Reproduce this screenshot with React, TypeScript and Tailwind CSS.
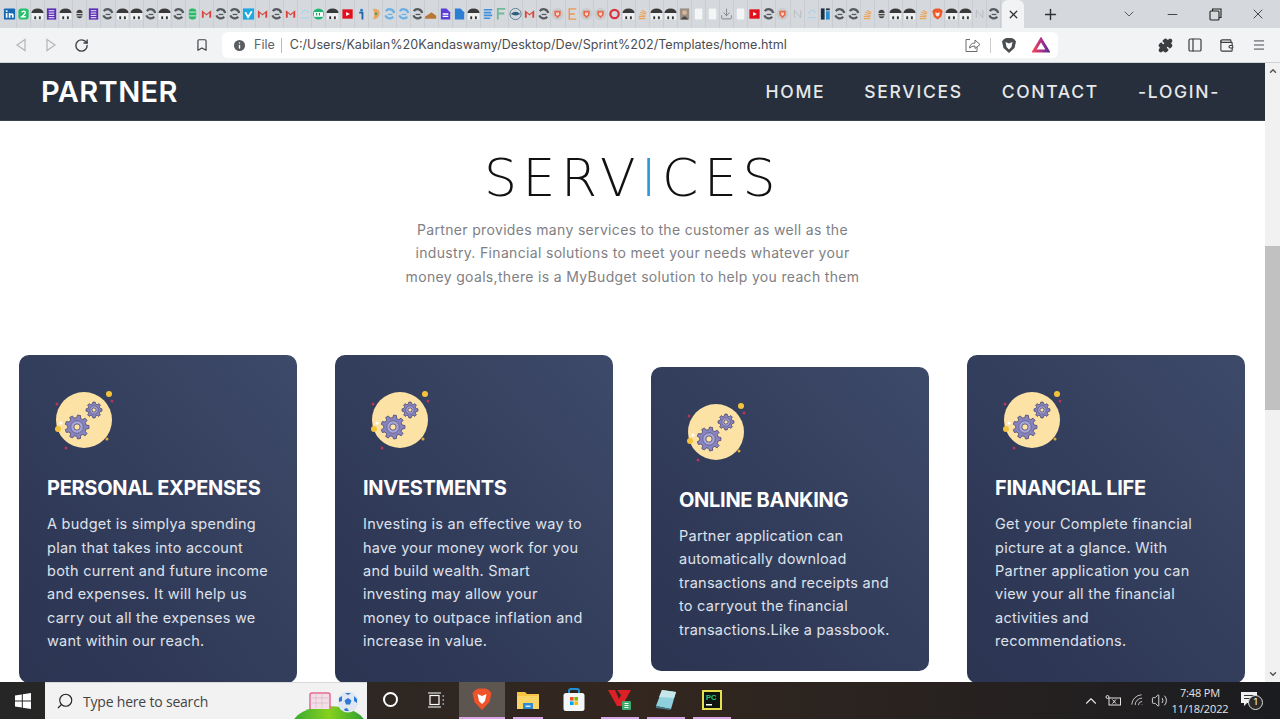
import {
  Bookmark,
  ChevronDown,
  ChevronUp,
  Download,
  Info,
  Menu,
  Minus,
  PanelLeft,
  Plus,
  Puzzle,
  RotateCw,
  Search,
  Volume2,
  Wallet,
  Wifi,
  X,
} from "lucide-react";

const tabIcons = [
  "li", "two", "arch", "lines", "arch", "bee", "lines", "spin", "arch", "arch", "spin", "arch", "spin", "db", "gmail", "spin",
  "spin", "vimeo", "gmail", "spin", "gmail", "cloud", "cb", "arch", "yt", "info", "ear", "bluespin", "bluespin", "spin", "hat",
  "doc", "bluedoc", "arch", "bluelines", "f", "globe", "gmail", "spin", "shield", "e", "shield", "shield", "ring", "arch", "stack",
  "arch", "arch", "photo", "blank", "blank", "down", "blank", "yt", "spin", "shield", "n", "cloud", "idark", "spin", "spin",
  "stack", "bee", "arch", "arch", "stack", "brave", "arch", "arch", "n", "spin",
];

const cards = [
  {
    title: "PERSONAL EXPENSES",
    lines: ["A budget is simplya spending", "plan that takes into account", "both current and future income", "and expenses. It will help us", "carry out all the expenses we", "want within our reach."],
  },
  {
    title: "INVESTMENTS",
    lines: ["Investing is an effective way to", "have your money work for you", "and build wealth. Smart", "investing may allow your", "money to outpace inflation and", "increase in value."],
  },
  {
    title: "ONLINE BANKING",
    lines: ["Partner application can", "automatically download", "transactions and receipts and", "to carryout the financial", "transactions.Like a passbook."],
  },
  {
    title: "FINANCIAL LIFE",
    lines: ["Get your Complete financial", "picture at a glance. With", "Partner application you can", "view your all the financial", "activities and", "recommendations."],
  },
];

function Favicon({ kind }: { kind: string }) {
  const arch = (
    <>
      <path d="M0.5 6 A6.5 5 0 0 1 13.5 6 Z" fill="#3a3a3a" />
      <rect x="1" y="6" width="12" height="7" fill="#eef0f1" />
      <rect x="3.5" y="9.5" width="2" height="3" fill="#333" />
      <rect x="8.5" y="9.5" width="2" height="3" fill="#333" />
    </>
  );
  const spin = (color: string) => (
    <>
      <path d="M3 4 A5 5 0 0 1 12 6 M11 10 A5 5 0 0 1 2.5 8.5" fill="none" stroke={color} strokeWidth="2.4" />
      <path d="M5 7.5 h5" stroke={color} strokeWidth="1.4" />
    </>
  );
  const shapes: Record<string, React.ReactNode> = {
    li: (
      <>
        <rect x="1" y="1" width="12" height="12" rx="1" fill="#1669b5" />
        <rect x="3" y="6" width="1.8" height="5" fill="#fff" />
        <rect x="3" y="3" width="1.8" height="1.8" fill="#fff" />
        <path d="M6.2 11 V6 H8 V7 Q11 5 11.4 8 V11 H9.6 V8.4 Q8 7.4 8 9 V11 Z" fill="#fff" />
      </>
    ),
    two: (
      <>
        <rect x="1.5" y="1" width="11" height="12" rx="3" fill="#25c16f" />
        <path d="M5 5.2 Q7 2.8 9 5 Q9 6.6 5 10 H9.4" fill="none" stroke="#fff" strokeWidth="1.5" />
      </>
    ),
    arch,
    lines: (
      <>
        <rect x="2" y="1" width="10" height="12" fill="#5b2fb3" />
        <path d="M4 3.5 H10 M4 6 H10 M4 8.5 H10 M4 11 H10" stroke="#fff" strokeWidth="1" />
      </>
    ),
    bluelines: <path d="M3 2.5 H12 M3 5.5 H11 M3 8.5 H12 M3 11.5 H10" stroke="#3f8ee0" strokeWidth="1.7" />,
    bee: (
      <>
        <ellipse cx="7" cy="7" rx="3.4" ry="4.5" fill="#444" />
        <path d="M1.5 6.5 H12.5 M3 9 H11" stroke="#ddd" strokeWidth="1" />
      </>
    ),
    spin: spin("#555a5e"),
    bluespin: spin("#6ab0e4"),
    db: (
      <>
        <rect x="3" y="1" width="8" height="12" rx="3.5" fill="#2fb568" />
        <path d="M3 5 H11 M3 9 H11" stroke="#d5f0df" strokeWidth="1" />
      </>
    ),
    gmail: <path d="M2 3 V11 H4 V6 L7 8.6 L10 6 V11 H12 V3 L7 7 Z" fill="#d9453a" />,
    vimeo: (
      <>
        <rect x="1" y="1" width="12" height="12" fill="#1ca7e0" />
        <path d="M3.5 5 L6.5 10.5 L10.5 4" fill="none" stroke="#fff" strokeWidth="2" />
      </>
    ),
    cloud: <path d="M3 11 H12 M4 7 Q5 3 8 3 Q10 3 11 6" fill="none" stroke="#a6d2ea" strokeWidth="1.2" />,
    cb: (
      <>
        <circle cx="7" cy="7" r="6" fill="#22b573" />
        <rect x="2" y="5" width="10" height="5" fill="#fff" />
        <path d="M5 6 V8.6 M8 6 V8.6" stroke="#1a8d59" strokeWidth="1.2" />
      </>
    ),
    yt: (
      <>
        <rect x="1.5" y="2" width="11" height="10" fill="#e0101d" />
        <path d="M5.5 4.8 L9.5 7 L5.5 9.2 Z" fill="#fff" />
      </>
    ),
    info: (
      <>
        <circle cx="7" cy="3" r="1.6" fill="#2c7fd0" />
        <path d="M4.5 5.5 H8 V13" fill="none" stroke="#2663a8" strokeWidth="2" />
      </>
    ),
    idark: (
      <>
        <rect x="2" y="1" width="4" height="12" fill="#1f2f44" />
        <rect x="7.5" y="4" width="4" height="9" fill="#2d8fd0" />
        <rect x="7.5" y="1" width="4" height="2" fill="#1f2f44" />
      </>
    ),
    ear: (
      <>
        <path d="M4 1.5 Q12 1 11.5 7 Q10 13 4.5 12.5 Q7 7 4 1.5 Z" fill="#e7a766" />
        <circle cx="7.5" cy="6.8" r="1.5" fill="#5a9b62" />
      </>
    ),
    hat: <path d="M0 10 L7 5 L12 9 V12 H0 Z" fill="#b7793a" />,
    doc: (
      <>
        <path d="M2 1 H8 L12 5 V13 H2 Z" fill="#5a3fd6" />
        <path d="M4 7 H10 M4 9.5 H10" stroke="#fff" strokeWidth="1.4" />
      </>
    ),
    bluedoc: <path d="M2 1 H8 L12 5 V13 H2 Z" fill="#2a7fd5" />,
    f: <path d="M3 13 V1.5 H11 M3 6.5 H10" fill="none" stroke="#73b89a" strokeWidth="2" />,
    globe: (
      <>
        <circle cx="7" cy="7" r="6" fill="none" stroke="#577b8f" strokeWidth="1" />
        <path d="M2 7 Q7 2 12 7 Q7 10 2 7 Z" fill="#2e5f7f" />
      </>
    ),
    shield: (
      <>
        <circle cx="7" cy="7" r="6.5" fill="#c9cbcd" />
        <path d="M3.6 3.5 H10.4 V8 L7 11.5 L3.6 8 Z" fill="#e8694a" />
        <path d="M5.4 5.4 H8.6 V7.6 L7 9.2 L5.4 7.6 Z" fill="#f6d3c8" />
      </>
    ),
    e: <path d="M11 1.5 H3.5 V12.5 H11 M3.5 7 H9.5" fill="none" stroke="#ea9651" strokeWidth="1.5" />,
    ring: <circle cx="7" cy="7" r="4.5" fill="none" stroke="#d9333f" strokeWidth="2.4" />,
    stack: <path d="M3 12 H10 M3 9.8 H10 M3.6 7.5 L10 8.6 M4.6 5 L10.4 7 M6.5 2.8 L11 6" fill="none" stroke="#eda55c" strokeWidth="1.2" />,
    photo: (
      <>
        <rect x="2" y="1" width="10" height="12" fill="#9a8f84" />
        <circle cx="7" cy="5.5" r="2.6" fill="#d9b59a" />
        <path d="M3 13 Q7 6 11 13 Z" fill="#4d4a48" />
      </>
    ),
    blank: <rect x="3" y="1" width="8" height="12" rx="1.5" fill="#f4f5f6" />,
    n: <path d="M3.5 11 V3 L10.5 11 V3" fill="none" stroke="#b5b9bc" strokeWidth="1" />,
    brave: (
      <>
        <path d="M3 2 L5 1 H9 L11 2 L12.5 4 L11 10 L7 13 L3 10 L1.5 4 Z" fill="#ec5a2b" />
        <path d="M4.5 5 L7 6 L9.5 5 L8.8 8.5 L7 10 L5.2 8.5 Z" fill="#fbe3da" />
      </>
    ),
  };
  if (kind === "down") {
    return <Download size={14} strokeWidth={1.4} className="text-[#6c7176]" />;
  }
  return (
    <svg width="14" height="14" viewBox="0 0 14 14">
      {shapes[kind]}
    </svg>
  );
}

// toothed wheel outline, outer radius r
function gearPath(cx: number, cy: number, r: number, teeth: number) {
  const inner = r * 0.78;
  const step = (Math.PI * 2) / teeth;
  const pts: string[] = [];
  for (let i = 0; i < teeth; i++) {
    const a = i * step;
    const corners: [number, number][] = [
      [a - step * 0.3, inner],
      [a - step * 0.18, r],
      [a + step * 0.18, r],
      [a + step * 0.3, inner],
    ];
    for (const [t, rad] of corners) {
      pts.push(`${(cx + rad * Math.cos(t)).toFixed(2)} ${(cy + rad * Math.sin(t)).toFixed(2)}`);
    }
  }
  return `M${pts.join(" L")} Z`;
}

function GearBadge() {
  const gear = (cx: number, cy: number, r: number, teeth: number) => (
    <g>
      <path d={gearPath(cx, cy, r, teeth)} fill="#8784c0" stroke="#4a4870" strokeWidth="0.8" strokeLinejoin="round" />
      <circle cx={cx} cy={cy} r={r * 0.52} fill="#a7a5d6" stroke="#4a4870" strokeWidth="0.6" />
      <circle cx={cx} cy={cy} r={r * 0.26} fill="#fde4a6" stroke="#4a4870" strokeWidth="0.8" />
    </g>
  );
  return (
    <svg width="62" height="62" viewBox="0 0 62 62">
      <circle cx="30" cy="30" r="28" fill="#fde2a5" />
      {gear(23, 37, 12, 9)}
      {gear(40, 20, 8, 8)}
      <circle cx="4" cy="39" r="3" fill="#f5c33b" />
      <circle cx="55" cy="4" r="3" fill="#f5c33b" />
      <circle cx="58" cy="11" r="1.5" fill="#b7345d" />
      <circle cx="3" cy="14" r="1.5" fill="#b7345d" />
      <circle cx="12" cy="58" r="1.5" fill="#b7345d" />
      <circle cx="53" cy="49" r="1.5" fill="#e3ab33" />
      <circle cx="7" cy="33" r="1.6" fill="#fff" />
    </svg>
  );
}

function ServiceCard({ title, lines }: { title: string; lines: string[] }) {
  return (
    <div className="w-[278px] rounded-[10px] bg-linear-to-tr from-[#2b3451] via-[#333e5c] to-[#3e4a69] pt-[35px] pb-[30px] pl-[28px] pr-2 text-[#dfe1ea]">
      <div className="ml-[7px] h-[62px]">
        <GearBadge />
      </div>
      <h3 className="mt-[22px] text-[20px] leading-[28px] font-bold tracking-[-0.3px] whitespace-nowrap text-white">{title}</h3>
      <p className="mt-[10px] text-[14.5px] leading-[23.4px] tracking-[0.25px] whitespace-nowrap">
        {lines.map((line) => (
          <span key={line} className="block">
            {line}
          </span>
        ))}
      </p>
    </div>
  );
}

function TabStrip() {
  return (
    <div className="flex h-[28px] shrink-0 items-center bg-[#d5d9dd]">
      <div className="flex w-[1002px] shrink-0 pl-[3px]">
        {tabIcons.map((kind, i) => (
          <div key={i} className="flex h-[28px] w-[14.07px] shrink-0 items-center justify-center border-r border-[#c9cdd1]">
            <Favicon kind={kind} />
          </div>
        ))}
      </div>
      <div className="flex h-[28px] w-[22px] shrink-0 items-center justify-center rounded-t-md bg-[#f1f3f5]">
        <X size={13} strokeWidth={2.4} className="text-[#2f3133]" />
      </div>
      <div className="flex w-[52px] shrink-0 justify-center">
        <Plus size={17} strokeWidth={2} className="text-[#2f3133]" />
      </div>
      <div className="ml-[33px] flex w-[40px] shrink-0 justify-center">
        <ChevronDown size={16} strokeWidth={1.2} className="text-[#3b3d40]" />
      </div>
      <div className="flex w-[46px] shrink-0 justify-center">
        <Minus size={15} strokeWidth={1.3} className="text-[#222]" />
      </div>
      <div className="flex w-[40px] shrink-0 justify-center">
        <svg width="13" height="13" viewBox="0 0 13 13" fill="none" stroke="#222" strokeWidth="1.1">
          <rect x="1" y="3" width="9" height="9" rx="1" />
          <path d="M3.5 3 V1 H12 V9.5 H10" />
        </svg>
      </div>
      <div className="flex w-[45px] shrink-0 justify-center">
        <X size={16} strokeWidth={1.2} className="text-[#222]" />
      </div>
    </div>
  );
}

function Toolbar() {
  return (
    <div className="flex h-[35px] shrink-0 items-center border-b border-[#d0d3d6] bg-[#f1f3f5]">
      <div className="flex w-[222px] items-center">
        <svg width="12" height="14" viewBox="0 0 12 14" className="ml-[15px]">
          <path d="M10 1.5 L2 7 L10 12.5 Z" fill="none" stroke="#b3b6b9" strokeWidth="1.2" />
        </svg>
        <svg width="12" height="14" viewBox="0 0 12 14" className="ml-[18px]">
          <path d="M2 1.5 L10 7 L2 12.5 Z" fill="none" stroke="#b3b6b9" strokeWidth="1.2" />
        </svg>
        <RotateCw size={15} strokeWidth={2.2} className="ml-[17px] text-[#3e4145]" />
        <Bookmark size={14} strokeWidth={2} className="ml-[106px] text-[#3e4145]" />
      </div>
      <div className="flex h-[26px] w-[836px] items-center rounded-md bg-white">
        <Info size={15} strokeWidth={2.2} fill="#5a5d60" className="ml-[10px] text-white" />
        <span className="ml-[7px] text-[12.5px] text-[#5f6368]">File</span>
        <span className="ml-[6px] h-[15px] w-px bg-[#b9bcbf]" />
        <span className="ml-[8px] w-[673px] text-[12.6px] whitespace-nowrap text-[#4a4d51]">
          C:/Users/Kabilan%20Kandaswamy/Desktop/Dev/Sprint%202/Templates/home.html
        </span>
        <svg width="16" height="15" viewBox="0 0 16 15" fill="none" stroke="#6a6d70" strokeWidth="1" className="ml-[2px]">
          <path d="M5 1.5 H1 V13.5 H12 V9" />
          <path d="M4.5 10 Q5 5 10 5 V2 L15 6.5 L10 10.5 V8 Q6.5 8 4.5 10 Z" />
        </svg>
        <span className="ml-[9px] h-[15px] w-px bg-[#c9ccce]" />
        <svg width="16" height="17" viewBox="0 0 16 17" className="ml-[10px]">
          <path d="M3 2 L5.5 1 H10.5 L13 2 L15 4.5 L13.5 11 L8 16 L2.5 11 L1 4.5 Z" fill="#4a4d52" />
          <path d="M4.5 5 L8 6.5 L11.5 5 L10.5 10 L8 12.5 L5.5 10 Z" fill="#fff" />
        </svg>
        <svg width="18" height="16" viewBox="0 0 18 16" className="ml-[15px]">
          <defs>
            <linearGradient id="bat" x1="0" x2="1" y1="0" y2="0">
              <stop offset="0" stopColor="#f2405a" />
              <stop offset="0.6" stopColor="#9e2f8f" />
              <stop offset="1" stopColor="#662d91" />
            </linearGradient>
          </defs>
          <path d="M9 2.5 L16 14 H2 Z" fill="none" stroke="url(#bat)" strokeWidth="3" />
        </svg>
      </div>
      <div className="flex flex-1 items-center">
        <Puzzle size={15} strokeWidth={2} fill="#3a3c3f" className="ml-[100px] text-[#3a3c3f]" />
        <PanelLeft size={16} strokeWidth={1.8} className="ml-[14px] text-[#3a3c3f]" />
        <Wallet size={15} strokeWidth={1.8} className="ml-[16px] text-[#3a3c3f]" />
        <Menu size={14} strokeWidth={1.6} className="ml-[18px] text-[#3a3c3f]" />
      </div>
    </div>
  );
}

function Navbar() {
  return (
    <nav className="flex h-[58px] shrink-0 items-center justify-between border-b border-[#3a434e] bg-[#262f3b] pr-[45px] pl-[41px] text-[#e6e8ea]">
      <span className="text-[29px] font-semibold tracking-[0.4px] text-white">PARTNER</span>
      <div className="flex gap-[39px] pt-px text-[17.5px] font-medium tracking-[1.7px]">
        <span>HOME</span>
        <span>SERVICES</span>
        <span>CONTACT</span>
        <span>-LOGIN-</span>
      </div>
    </nav>
  );
}

function Scrollbar() {
  return (
    <div className="flex w-[15px] shrink-0 flex-col items-center bg-[#f1f1f1]">
      <ChevronUp size={10} strokeWidth={3.5} className="mt-[3px] text-[#555]" />
      <div className="mt-[170px] h-[164px] w-full bg-[#c1c1c1]" />
      <div className="flex-1" />
      <ChevronDown size={10} strokeWidth={3.5} className="mb-[3px] text-[#555]" />
    </div>
  );
}

function TaskIcon({ children, active, bar }: { children: React.ReactNode; active?: boolean; bar?: string }) {
  return (
    <div className={`flex h-[37px] w-[46px] flex-col items-center ${active ? "bg-[#5d5550]" : ""}`}>
      <div className="flex flex-1 items-center justify-center">{children}</div>
      {bar ? <div className={`h-[2px] bg-[#d9a6e8] ${bar}`} /> : <div className="h-[2px]" />}
    </div>
  );
}

function Taskbar() {
  return (
    <div className="flex h-[37px] shrink-0 items-center bg-linear-to-r from-[#262626] via-[#33271f] to-[#1b1c20] text-white">
      <div className="flex w-[45px] justify-center">
        <svg width="16" height="16" viewBox="0 0 16 16">
          <path d="M0 2.4 L6.8 1.4 V7.5 H0 Z M7.8 1.2 L16 0 V7.5 H7.8 Z M0 8.5 H6.8 V14.6 L0 13.6 Z M7.8 8.5 H16 V16 L7.8 14.8 Z" fill="#fff" />
        </svg>
      </div>
      <div className="relative flex h-[37px] w-[322px] items-center overflow-hidden border-t border-[#d9d9d9] bg-[#f2f2f2]">
        <Search size={18} strokeWidth={1.5} className="ml-[11px] -scale-x-100 text-[#222]" />
        <span className="ml-[9px] font-['Open_Sans',sans-serif] text-[14px] tracking-[-0.2px] text-[#444]">Type here to search</span>
        <div className="absolute top-[23px] left-[247px] h-[40px] w-[74px] rounded-[50%] bg-linear-to-r from-[#2fa82f] via-[#86d11c] to-[#1f9d2f]" />
        <svg width="24" height="18" viewBox="0 0 24 18" className="absolute top-[9px] left-[263px]">
          <path d="M2 17 V3 Q2 1 4 1 H20 Q22 1 22 3 V17" fill="#f3dfe8" stroke="#e66a93" strokeWidth="1.5" />
          <path d="M2 6 H22 M2 11 H22 M8 1 V16 M14 1 V16" stroke="#d9b7c6" strokeWidth="0.7" />
        </svg>
        <svg width="22" height="22" viewBox="0 0 22 22" className="absolute top-[8px] left-[292px]">
          <circle cx="11" cy="11" r="10.5" fill="#dfe7f3" />
          <path d="M11 7 L14.5 9.5 L13 13.5 H9 L7.5 9.5 Z M2 7 L5 5 L5 10 L2 11 Z M17 5 L20 8 L20 12 L17 10 Z M8 2 H14 L11 4 Z M7 18 L10 17 L12 20 L8 20 Z" fill="#2f78d6" />
        </svg>
      </div>
      <TaskIcon>
        <span className="h-[15px] w-[15px] rounded-full border-2 border-white" />
      </TaskIcon>
      <TaskIcon>
        <svg width="18" height="16" viewBox="0 0 18 16" fill="none" stroke="#fff" strokeWidth="1.2">
          <rect x="3" y="3.5" width="9" height="9" />
          <path d="M1 1 H14 M1 15 H14 M15.5 4 H17 M15.5 8 H17 M15.5 12 H17" />
        </svg>
      </TaskIcon>
      <TaskIcon active bar="w-full">
        <svg width="20" height="23" viewBox="0 0 20 23">
          <path d="M4 1.5 L7 0.5 H13 L16 1.5 L19.5 5 L17.5 14 L10 22 L2.5 14 L0.5 5 Z" fill="#f0532a" />
          <path d="M5.5 6 L10 8 L14.5 6 L13 13 L10 16 L7 13 Z" fill="#fff" />
        </svg>
      </TaskIcon>
      <TaskIcon bar="w-[30px]">
        <svg width="22" height="18" viewBox="0 0 22 18">
          <path d="M0 1 H8 L10 3 H22 V18 H0 Z" fill="#f7c444" />
          <rect x="0" y="5" width="22" height="13" fill="#fbd466" />
          <path d="M6 12 H16 V18 H6 Z" fill="#2f8bd0" />
          <path d="M8.5 14.5 H13.5 V16 H8.5 Z" fill="#d6ecfb" />
        </svg>
      </TaskIcon>
      <TaskIcon>
        <svg width="22" height="24" viewBox="0 0 22 24">
          <path d="M6 6 V3 Q6 1 8 1 H14 Q16 1 16 3 V6" fill="none" stroke="#1f8fd6" strokeWidth="2" />
          <rect x="0.5" y="5" width="21" height="18" rx="2.5" fill="#f5f6f7" />
          <rect x="7" y="9" width="3.6" height="3.6" fill="#f25022" />
          <rect x="11.4" y="9" width="3.6" height="3.6" fill="#7fba00" />
          <rect x="7" y="13.4" width="3.6" height="3.6" fill="#00a4ef" />
          <rect x="11.4" y="13.4" width="3.6" height="3.6" fill="#ffb900" />
        </svg>
      </TaskIcon>
      <TaskIcon bar="w-[38px]">
        <svg width="24" height="22" viewBox="0 0 24 22">
          <path d="M0 1 H7 L11 10 L13 6 L9 1 H23 L14 17 H9 Z" fill="#dd1f26" />
          <rect x="14" y="12" width="9" height="9" rx="1" fill="#3dab6b" />
          <path d="M16.5 14.5 H20.5 M16.5 16.5 H20.5 M16.5 18.5 H20.5" stroke="#fff" strokeWidth="1" />
        </svg>
      </TaskIcon>
      <TaskIcon bar="w-[38px]">
        <svg width="22" height="22" viewBox="0 0 22 22">
          <path d="M7 1 L21 3 L16 20 L1 17 Z" fill="#8fd0df" />
          <path d="M7 1 L21 3 L19 9 L4 8 Z" fill="#c7e6ea" />
          <path d="M1 17 L16 20 L15 21 L1 19 Z" fill="#49788a" />
        </svg>
      </TaskIcon>
      <TaskIcon bar="w-[38px]">
        <svg width="20" height="20" viewBox="0 0 20 20">
          <rect width="20" height="20" fill="#e6e04a" />
          <rect x="2" y="2" width="16" height="16" fill="#0f1410" />
          <rect x="4" y="14" width="6" height="1.5" fill="#fff" />
          <text x="4" y="10" fontSize="7.5" fontWeight="700" fill="#27d17f" fontFamily="Liberation Sans, sans-serif">
            PC
          </text>
        </svg>
      </TaskIcon>
      <div className="flex-1" />
      <div className="flex items-center text-[#e4e4e4]">
        <ChevronUp size={18} strokeWidth={1.5} />
        <svg width="17" height="13" viewBox="0 0 17 13" fill="none" stroke="#e4e4e4" strokeWidth="1" className="ml-[5px]">
          <rect x="4" y="4" width="11.5" height="7" />
          <circle cx="2.5" cy="3" r="1.5" />
          <path d="M7.5 5.5 L11 9.5 M11 5.5 L7.5 9.5" />
        </svg>
        <Wifi size={16} strokeWidth={1.3} className="ml-[8px] -rotate-45 text-[#cfcfcf]" />
        <Volume2 size={17} strokeWidth={1.3} className="ml-[5px]" />
        <div className="flex w-[64px] flex-col items-center font-['Open_Sans',sans-serif] text-[11px] leading-[16px] tracking-[-0.15px]">
          <span>7:48 PM</span>
          <span>11/18/2022</span>
        </div>
        <div className="relative mr-[23px] ml-[9px] h-[18px] w-[16px]">
          <svg width="16" height="15" viewBox="0 0 16 15">
            <path d="M0 0 H16 V11 H6 L3 14 V11 H0 Z" fill="#f0f0f0" />
            <path d="M3 3.5 H13 M3 6.5 H13" stroke="#333" strokeWidth="1" />
          </svg>
          <span className="absolute top-[3px] left-[7px] flex h-[15px] w-[15px] items-center justify-center rounded-full border border-[#ddd] bg-[#2a2a2a] text-[9.5px] text-white">
            1
          </span>
        </div>
      </div>
    </div>
  );
}

export default function App() {
  return (
    <div className="flex h-[719px] w-[1280px] flex-col overflow-hidden bg-white font-['Inter',sans-serif]">
      <TabStrip />
      <Toolbar />
      <div className="flex h-[619px] shrink-0 overflow-hidden">
        <div className="flex min-w-0 flex-1 flex-col">
          <Navbar />
          <section className="flex flex-1 flex-col items-center">
            <h1 className="mt-[25px] h-[64px] font-['DejaVu_Sans',sans-serif] text-[52px] leading-[64px] font-extralight tracking-[5.6px] text-[#111]">
              SERV<span className="text-[#2b9ad6]">I</span>CES
            </h1>
            <p className="mt-[8px] text-center text-[14px] leading-[23.4px] tracking-[0.33px] text-[#808084]">
              Partner provides many services to the customer as well as the
              <br />
              industry. Financial solutions to meet your needs whatever your
              <br />
              money goals,there is a MyBudget solution to help you reach them
            </p>
            <div className="mt-[67px] grid w-full grid-cols-[repeat(4,278px)] items-center gap-[38px] px-[19px]">
              {cards.map((card) => (
                <ServiceCard key={card.title} title={card.title} lines={card.lines} />
              ))}
            </div>
          </section>
        </div>
        <Scrollbar />
      </div>
      <Taskbar />
    </div>
  );
}
